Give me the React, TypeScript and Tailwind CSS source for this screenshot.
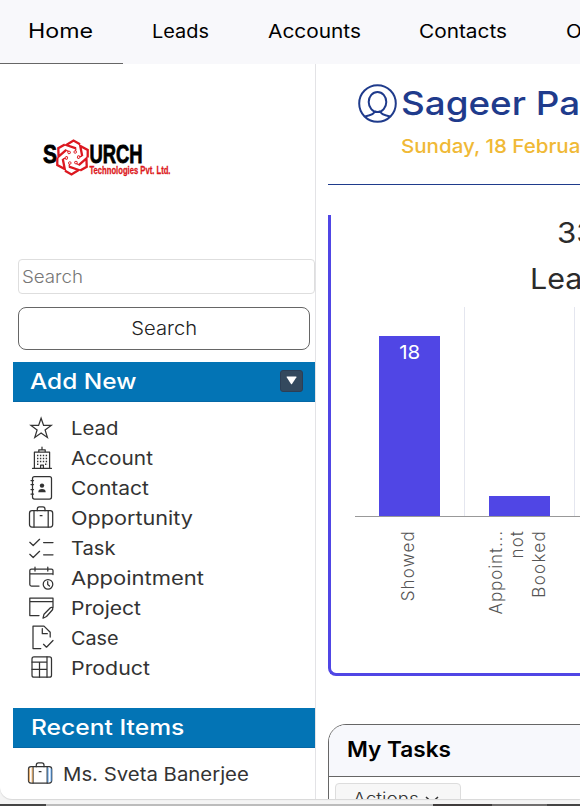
import type { ReactNode } from 'react';

function Icon({ children, className = '' }: { children: ReactNode; className?: string }) {
  return (
    <svg viewBox="0 0 26 26" fill="none" stroke="currentColor" strokeWidth="1.25" strokeLinejoin="round" strokeLinecap="round" className={`h-[26px] w-[26px] shrink-0 ${className}`}>
      {children}
    </svg>
  );
}

const Briefcase = ({ tinted = false }: { tinted?: boolean }) => (
  <Icon>
    <rect x="1.5" y="5.7" width="23.2" height="16.3" rx="2.5" />
    <path d="M6 5.7V22M20.2 5.7V22M9.3 5.7V4.2Q9.3 1.8 11.3 1.8H15Q17 1.8 17 4.2V5.7M12.2 10.7h1.8" />
    {tinted && (
      <>
        <path d="M2.3 8V20M5.2 7V21" stroke="#e8a250" strokeWidth="1" />
        <path d="M21 7V21M24.100 8V20" stroke="#4f9be8" strokeWidth="1" />
      </>
    )}
  </Icon>
);

const items: { label: string; fit: string; icon: ReactNode }[] = [
  {
    label: 'Lead', fit: 'scale-x-[1.1]',
    icon: <Icon><path strokeLinejoin="miter" d="M13.1 3.2 15.6 10.4H23.2L17.1 14.9 19.4 22.4 13.1 18 6.8 22.4 9.1 14.9 3 10.4H10.6Z" /></Icon>,
  },
  {
    label: 'Account', fit: 'scale-x-[1.124]',
    icon: (
      <Icon>
        <path d="M4.6 23.4H23.4M6.4 23.4V7.2H21.6V23.4M10.8 7V4.8H17.2V7M14 4.6V2.2M12.6 23.2V20.2H15.4V23.2" />
        <path d="M9 10.5h11M9 13.5h11M9 16.5h11M9 19.2h2M17 19.2h3" strokeWidth="1.5" strokeDasharray="1.4 1.5" strokeLinecap="butt" />
      </Icon>
    ),
  },
  {
    label: 'Contact', fit: 'scale-x-[1.135]',
    icon: (
      <Icon>
        <rect x="4.5" y="1.5" width="19" height="22.5" rx="2" />
        <path d="M3 5.5H5.5M3 9.5H5.5M3 14.5H5.5M3 19H5.5" />
        <circle cx="14" cy="10.6" r="2.2" fill="currentColor" stroke="none" />
        <path d="M10.3 17.2Q10.3 14.1 14 14.1T17.7 17.2Z" fill="currentColor" stroke="none" />
      </Icon>
    ),
  },
  { label: 'Opportunity', fit: 'scale-x-[1.169]', icon: <Briefcase /> },
  {
    label: 'Task', fit: 'scale-x-[1.09]',
    icon: <Icon><path d="M1.8 7.3 5.2 10.5 11.6 4.3M15.6 7.5H25M1.8 19.3 5.2 22.5 11.6 16.3M15.6 19.8H25" /></Icon>,
  },
  {
    label: 'Appointment', fit: 'scale-x-[1.188]',
    icon: (
      <Icon>
        <path d="M25 9.6V5.6Q25 4 23.4 4H3.5Q1.8 4 1.8 5.6V19.5Q1.8 21 3.5 21H11M1.8 8.8H25M7 2.2V6M19.8 2.2V6" />
        <circle cx="20" cy="19.3" r="4.8" /><path d="M19.7 16.6V19.5L21.5 21" />
      </Icon>
    ),
  },
  {
    label: 'Project', fit: 'scale-x-[1.139]',
    icon: <Icon><path d="M11 20.5H1.8V3H25V12.5M1.8 6.500H25M15 23.200 16 19.200 22.4 12.700Q24 11.800 24.8 13.400 25 14.200 24.3 15L18.5 21.500Z" /></Icon>,
  },
  {
    label: 'Case', fit: 'scale-x-[1.07]',
    icon: <Icon><path d="M12.8 23.500H5V1.100H16L22.2 7.200V12M14.3 3.500V8.700H19.3M15.5 19.300 18.5 22.200 25 15.500" /></Icon>,
  },
  {
    label: 'Product', fit: 'scale-x-[1.154]',
    icon: <Icon><rect x="4" y="1.900" width="19.5" height="20.3" rx="2" /><path d="M4 7H19M4 14.300H19M11.5 7V22.200M19 1.900V22.200" /></Icon>,
  },
];

function Logo() {
  return (
    <svg width="134" height="44" viewBox="0 0 134 44" className="ml-10">
      <g fontFamily="'Liberation Sans', sans-serif" fontWeight="bold">
        <text x="3" y="27" fontSize="25.5" textLength="14" lengthAdjust="spacingAndGlyphs" stroke="#000" strokeWidth=".8">S</text>
        <text x="49.5" y="27" fontSize="25.5" textLength="53" lengthAdjust="spacingAndGlyphs" stroke="#000" strokeWidth=".8">URCH</text>
        <text x="49.500" y="37.500" fontSize="10.5" fill="#dc1820" stroke="#dc1820" strokeWidth=".3" textLength="81" lengthAdjust="spacingAndGlyphs">Technologies Pvt. Ltd.</text>
      </g>
      <g transform="translate(32.5 21.5)" stroke="#dc1820" fill="none" strokeWidth="2.3">
        {[0, 60, 120, 180, 240, 300].map((a) => (
          <g key={a} transform={`rotate(${a})`}>
            <path d="M7.500-13.200 1-17 -6.200-12.500 3.500-9.200" />
            <path d="M3.500-9.200 3-6.500" strokeWidth="1.2" />
            <circle cx="2.700" cy="-5.500" r="1.3" strokeWidth=".9" fill="#fff" />
          </g>
        ))}
      </g>
    </svg>
  );
}

const nav = [
  { label: 'Leads', box: 'w-[116px]', fit: 'scale-x-[1.077]' },
  { label: 'Accounts', box: 'w-[151px]', fit: 'scale-x-[1.127]' },
  { label: 'Contacts', box: 'w-[147px]', fit: 'scale-x-[1.124]' },
  { label: 'Opportunities', box: 'w-[150px]', fit: 'scale-x-[1.12]' },
];

export default function App() {
  return (
    <div className="flex h-[806px] w-[580px] flex-col overflow-hidden bg-[#f4f4f4] font-['Inter',sans-serif] text-[#333]">
      <nav className="flex h-16 shrink-0 overflow-hidden whitespace-nowrap bg-[#f8f8fb] text-[18.5px] leading-[62px] text-black">
        <div className="mr-[29px] w-[123px] shrink-0 border-b border-[#666] pl-[28px] text-[20px]">
          <span className="inline-block origin-left scale-x-[1.16]">Home</span>
        </div>
        {nav.map((n) => (
          <div key={n.label} className={`${n.box} shrink-0`}>
            <span className={`inline-block origin-left ${n.fit}`}>{n.label}</span>
          </div>
        ))}
      </nav>

      <div className="flex h-[735px] shrink-0 overflow-hidden rounded-bl-xl bg-white shadow-[0_1px_1px_#d8d8d8]">
        <aside className="flex w-[316px] shrink-0 flex-col border-r border-[#e3e3e6] pt-[72px]">
          <Logo />
          <div className="mt-[79px] ml-[18px] flex h-[35px] w-[297px] shrink-0 items-center rounded border border-[#dedede] pt-0.5 pl-[3px] text-[17.5px] font-light text-[#777]">
            <span className="origin-left scale-x-[1.069]">Search</span>
          </div>
          <button className="mt-[13px] ml-[18px] h-[43px] w-[292px] shrink-0 rounded-lg border border-[#666] text-[18.5px] font-light text-[#222]">
            <span className="inline-block scale-x-[1.09]">Search</span>
          </button>
          <div className="mt-3 ml-[13px] flex h-10 shrink-0 items-center justify-between border-b border-[#0568a6] bg-[#0374b5] pr-3 pl-[17px] text-[21.5px] font-[480] text-white">
            <span className="origin-left scale-x-[1.135]">Add New</span>
            <div className="mt-[-2px] flex h-[22px] w-[23px] items-center justify-center rounded-[3px] border border-[#2c3e55] bg-[#34495e]">
              <svg width="11" height="9" viewBox="0 0 11 9"><path d="M.5 1Q.5.5 1 .5H10Q10.7.5 10.4 1.2L6 8Q5.5 8.6 5 8Z" fill="#fff" /></svg>
            </div>
          </div>
          <ul className="mt-[11px] ml-[28px] shrink-0 text-[18.5px]">
            {items.map((i) => (
              <li key={i.label} className="flex h-[30px] items-center gap-[17px]">
                {i.icon}
                <span className={`origin-left pt-0.5 ${i.fit}`}>{i.label}</span>
              </li>
            ))}
          </ul>
          <div className="mt-[25px] ml-[13px] flex h-10 shrink-0 items-center border-b border-[#0568a6] bg-[#0374b5] pl-[18px] text-[21.5px] font-[480] text-white">
            <span className="origin-left scale-x-[1.145]">Recent Items</span>
          </div>
          <div className="mt-[11px] ml-[27px] flex h-[30px] shrink-0 items-center gap-[10px] text-[18.5px]">
            <Briefcase tinted />
            <span className="origin-left scale-x-[1.1] pt-0.5 whitespace-nowrap">Ms. Sveta Banerjee</span>
          </div>
        </aside>

        <main className="flex w-[600px] shrink-0 flex-col pl-3 whitespace-nowrap">
          <header className="h-[121px] shrink-0 border-b border-[#1f3b8c] pt-[18px]">
            <div className="flex h-[43px] items-center pl-[30px] text-[33px] font-[450] text-[#1f3b8c]">
              <svg width="39" height="39" viewBox="0 0 39 39" fill="none" stroke="currentColor" strokeWidth="2" className="mr-1 shrink-0">
                <circle cx="19.5" cy="19.5" r="18.3" />
                <ellipse cx="19.5" cy="18" rx="8.8" ry="10" />
                <path d="M16.5 27.500Q16.500 30.500 7 32.500M22.500 27.500Q22.500 30.500 32 32.500M16.500 27.500Q19.500 28.700 22.500 27.500" />
              </svg>
              <span className="origin-left scale-x-[1.115]">Sageer Par</span>
            </div>
            <div className="mt-2 pl-[73px] text-[19px] leading-7 font-[480] text-[#f0b936]">
              <span className="inline-block origin-left scale-x-[1.08]">Sunday, 18 February 2024</span>
            </div>
          </header>

          <section className="mt-[30px] flex h-[461px] shrink-0 flex-col rounded-bl-lg border-b-[3px] border-l-[3px] border-[#5046e5]">
            <div className="h-[92px] shrink-0 text-[29px] leading-[46px] text-[#2b2b2b]">
              <div className="mt-[-5px] pl-[226px]"><span className="inline-block origin-left scale-x-[1.08]">33</span></div>
              <div className="pl-[199px]"><span className="inline-block origin-left scale-x-[1.05]">Leads</span></div>
            </div>
            <div className="ml-6 flex h-[210px] shrink-0 items-end border-b border-[#999]">
              <div className="flex h-full w-[110px] items-end justify-center border-r border-[#e4e6ef]">
                <div className="h-[180px] w-[61px] bg-[#5046e5] text-center text-[19px] leading-[34px] text-white">
                  <span className="inline-block scale-x-[1.08]">18</span>
                </div>
              </div>
              <div className="flex h-full w-[110px] items-end justify-center border-r border-[#e4e6ef]">
                <div className="h-[20px] w-[61px] bg-[#5046e5]" />
              </div>
            </div>
            <div className="mt-[13px] ml-6 flex text-[17px] leading-[21.5px] font-light text-[#555]">
              <div className="flex w-[110px] justify-center pr-0.5">
                <span className="rotate-180 self-start tracking-[1.2px] [writing-mode:vertical-rl]">Showed</span>
              </div>
              <div className="flex w-[110px] items-start justify-center pr-1">
                <span className="rotate-180 tracking-[0.9px] [writing-mode:vertical-rl]">Appoint...</span>
                <span className="rotate-180 tracking-[1.1px] [writing-mode:vertical-rl]">not</span>
                <span className="rotate-180 tracking-[1.3px] [writing-mode:vertical-rl]">Booked</span>
              </div>
            </div>
          </section>

          <section className="mt-12 h-[100px] shrink-0 rounded-tl-[18px] border border-[#666]">
            <h2 className="h-[52px] rounded-tl-[17px] border-b border-[#666] bg-[#f7f8fc] pl-[18px] text-[21.5px] leading-[49px] font-semibold text-black">
              <span className="inline-block origin-left scale-x-[1.052]">My Tasks</span>
            </h2>
            <button className="mt-1.5 ml-1.5 flex h-8 w-[126px] items-center rounded border border-[#ddd] bg-[#f7f7f7] pt-0.5 pl-[17px] text-[17px] font-light text-[#333]">
              <span className="origin-left scale-x-[1.12]">Actions</span>
              <svg width="14" height="8" viewBox="0 0 14 8" fill="none" stroke="currentColor" strokeWidth="1.5" className="ml-[13px]"><path d="M1 1 7 6.5 13 1" /></svg>
            </button>
          </section>
        </main>
      </div>

      <div className="mt-[5px] flex h-0.5 shrink-0 bg-[#454545]">
        <div className="w-[46px]" />
        <div className="w-[387px] bg-[#bcbcbc]" />
        <div className="w-[59px] bg-[#3f3c3c]" />
        <div className="w-[55px] bg-[#706e6e]" />
      </div>
    </div>
  );
}
